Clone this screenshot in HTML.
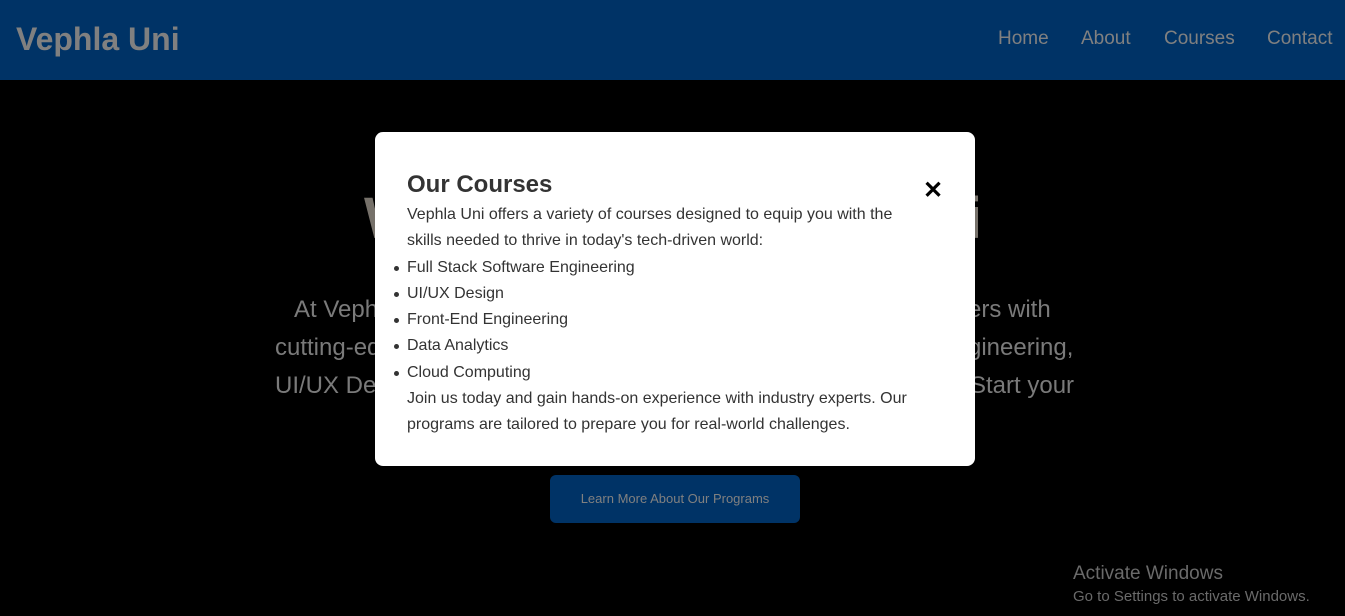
<!DOCTYPE html>
<html><head><meta charset="utf-8"><style>
*{margin:0;padding:0;box-sizing:border-box}
body{width:1345px;height:616px;background:#000;font-family:"Liberation Sans",Arial,sans-serif;position:relative;overflow:hidden}
.hdr{position:absolute;left:0;top:0;width:1345px;height:80px;background:#003366}
.logo{position:absolute;left:16px;top:21px;font-size:32px;font-weight:bold;color:#808080}
.nav{position:absolute;top:28px;font-size:19px;color:#808080}
.t{position:absolute;color:#7a7a7a;white-space:nowrap}
.h1{font-size:58px;font-weight:bold;color:#76716a}
.p{font-size:24px}
.btn{position:absolute;left:550px;top:475px;width:250px;height:48px;background:#003366;border-radius:6px;color:#808080;font-size:13px;text-align:center;line-height:48px}
.modal{position:absolute;left:375px;top:132px;width:600px;height:334px;background:#fff;border-radius:8px;color:#222}
.modal h2{position:absolute;left:32px;top:39px;font-size:24px;font-weight:bold;color:#333}
.x{position:absolute;left:548px;top:44px;font-size:24px;font-weight:bold;color:#000}
.body{position:absolute;left:32px;top:70px;width:520px;font-size:16px;line-height:26.3px;color:#333}
.body ul{margin-left:0;padding-left:0;list-style:none}
.body li{position:relative}
.body li:before{content:"";position:absolute;left:-13px;top:11px;width:5px;height:5px;border-radius:50%;background:#333}
.win1{position:absolute;left:1073px;top:563px;font-size:19px;color:#6a6a6a}
.win2{position:absolute;left:1073px;top:588px;font-size:15px;color:#6a6a6a}
</style></head><body>
<div class="hdr"><div class="logo">Vephla Uni</div>
<div class="nav" style="left:998px">Home</div><div class="nav" style="left:1081px">About</div><div class="nav" style="left:1164px">Courses</div><div class="nav" style="left:1267px">Contact</div></div>
<div class="t h1" style="left:364px;top:185px">Welcome</div>
<div class="t h1" style="left:966px;top:185px">i</div>
<div class="t p" style="left:294px;top:296px">At Vephla Uni, we empower future tech leaders with</div>
<div class="t p" style="left:275px;top:334px">cutting-edge courses in Full Stack Engineering,</div>
<div class="t p" style="left:275px;top:372px">UI/UX Design, and more. Start your</div>
<div class="t p" style="left:968px;top:296px">ers with</div>
<div class="t p" style="left:968px;top:334px">gineering,</div>
<div class="t p" style="left:970px;top:372px">Start your</div>
<div class="btn">Learn More About Our Programs</div>
<div class="modal">
<h2>Our Courses</h2><div class="x">✕</div>
<div class="body">Vephla Uni offers a variety of courses designed to equip you with the skills needed to thrive in today's tech-driven world:
<ul><li>Full Stack Software Engineering</li><li>UI/UX Design</li><li>Front-End Engineering</li><li>Data Analytics</li><li>Cloud Computing</li></ul>
Join us today and gain hands-on experience with industry experts. Our programs are tailored to prepare you for real-world challenges.</div>
</div>
<div class="win1">Activate Windows</div><div class="win2">Go to Settings to activate Windows.</div>
</body></html>
